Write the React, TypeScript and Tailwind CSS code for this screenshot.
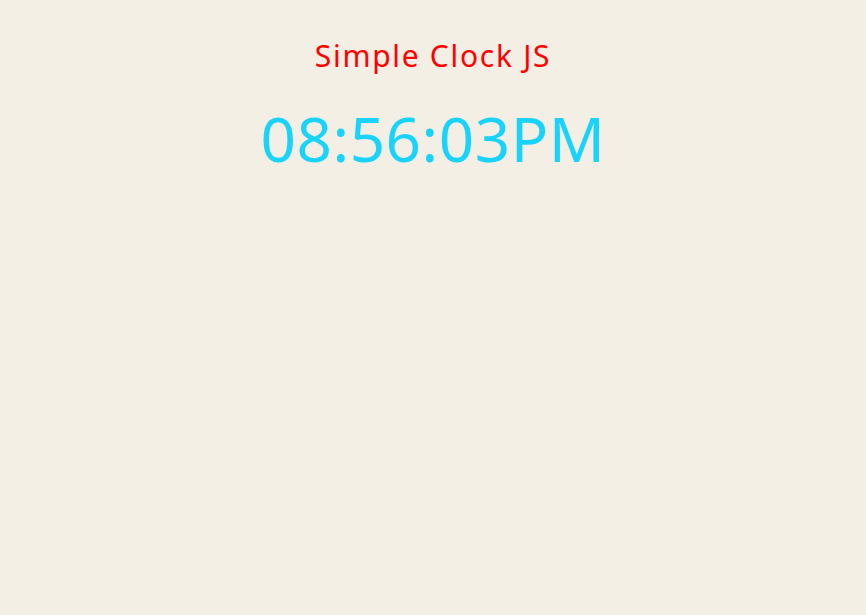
import React from 'react';

export default function App() {
  return (
    <div className="min-h-screen w-full bg-[#f3efe5] font-['Noto_Sans',sans-serif]">
      <div className="flex flex-col items-center pt-[34px]">
        <h1 className="text-[30px] leading-[44px] font-normal tracking-[1.7px] text-[#ff0000]">Simple Clock JS</h1>
        <div className="mt-[18px] text-[62px] leading-[84px] font-normal tracking-[0.5px] text-[#1ad3fb]">08:56:03PM</div>
      </div>
    </div>
  );
}
